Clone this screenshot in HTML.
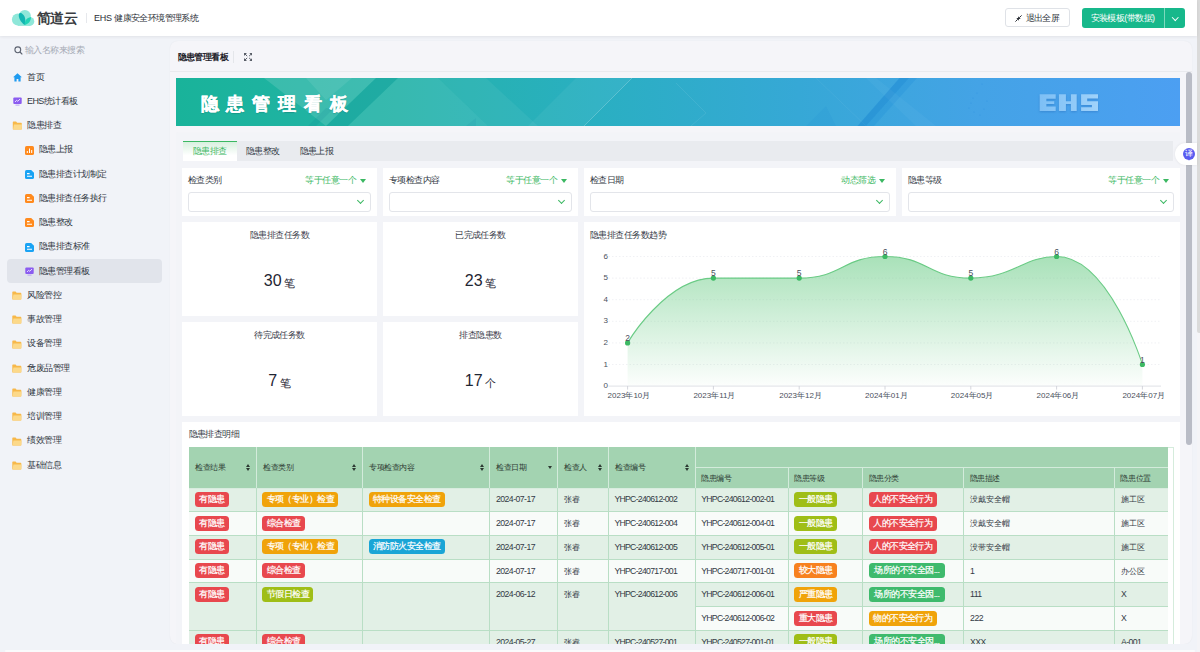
<!DOCTYPE html>
<html><head><meta charset="utf-8">
<style>
*{box-sizing:border-box}
html,body{margin:0;padding:0}
body{width:1200px;height:652px;overflow:hidden;position:relative;background:#f1f3f8;font-family:"Liberation Sans",sans-serif;color:#333a45;letter-spacing:-0.55px}
.a{position:absolute}
.t{position:absolute;white-space:nowrap;line-height:1}
/* sidebar */
.si{position:absolute;left:0;width:165px;height:24px;font-size:9px;letter-spacing:-0.5px;color:#2f3540;line-height:24px;white-space:nowrap}
.si .ic{position:absolute;top:8.2px;left:12.5px;width:9px;height:9px}
.si .tx{position:absolute;left:27px;top:0}
.si.sub .ic{left:24.8px}
.si.sub .tx{left:38.6px}
.card{position:absolute;background:#fff}
.flabel{position:absolute;top:8px;left:6px;font-size:9px;line-height:9px;color:#333a45;white-space:nowrap}
.fop{position:absolute;top:8px;right:21px;font-size:9px;line-height:9px;color:#3bb862;white-space:nowrap}
.fop:after{content:"";position:absolute;right:-10.4px;top:2.5px;border-left:3.5px solid transparent;border-right:3.5px solid transparent;border-top:4.5px solid #3bb862}
.finput{position:absolute;left:6px;right:6px;top:24px;height:19.5px;border:1px solid #e3e5ea;border-radius:3px}
.finput:after{content:"";position:absolute;right:7px;top:5px;width:4px;height:4px;border-right:1px solid #3bb862;border-bottom:1px solid #3bb862;transform:rotate(45deg)}
.stt{position:absolute;left:0;right:0;top:9px;text-align:center;font-size:9px;line-height:9px;color:#3b404b}
.stv{position:absolute;left:0;right:0;top:49px;text-align:center;font-size:16px;line-height:20px;color:#1f2633;letter-spacing:0}
.stv span{font-size:11px;margin-left:2.5px;position:relative;top:1px}
</style></head>
<body>
<!-- right strip -->
<div class="a" style="left:1196.5px;top:0;width:3.5px;height:652px;background:#f4f4f7"></div><div class="a" style="left:1197px;top:-4px;width:4px;height:337.4px;border-radius:2px;background:#dadada"></div>
<!-- header -->
<div class="a" style="left:0;top:0;width:1197px;height:36px;background:#fff;box-shadow:0 1px 3px rgba(0,0,0,.07)">
  <svg class="a" style="left:8px;top:6px" width="32" height="24" viewBox="0 0 32 24">
    <g fill="#8fe7d9"><circle cx="9.8" cy="13.5" r="5.9"/><circle cx="16.8" cy="10" r="6.1"/><circle cx="21.8" cy="15.4" r="4.5"/><rect x="9.8" y="12" width="12" height="7.9"/></g>
    <path d="M16.75,19.1 C12.5,16 10.2,11.5 10.9,8.2 C11.2,6.9 12.5,6.6 13.6,7.2 C17,9.2 18.3,14 16.75,19.1 Z" fill="#12b6b2"/>
    <path d="M16.75,19.1 C16.4,15 18.6,11.8 22.9,11 C23.3,14.6 20.6,17.8 16.75,19.1 Z" fill="#1fd4b6"/>
  </svg>
  <div class="t" style="left:37px;top:11px;font-size:14px;line-height:15px;color:#3a3d42;font-weight:bold;letter-spacing:-0.6px">简道云</div>
  <div class="a" style="left:85.5px;top:13px;width:1px;height:10px;background:#e6e8ec"></div>
  <div class="t" style="left:94px;top:14px;font-size:9px;line-height:9px;color:#2b2f36;letter-spacing:-0.6px"><span style="letter-spacing:-0.2px">EHS </span>健康安全环境管理系统</div>
  <!-- buttons -->
  <div class="a" style="left:1004.5px;top:8.3px;width:65px;height:19px;border:1px solid #dfe2e7;border-radius:3px;background:#fff"></div>
  <svg class="a" style="left:1015.2px;top:14.6px" width="7" height="7" viewBox="0 0 7 7"><path d="M6.6,0.4 L4.3,2.7 M0.4,6.6 L2.7,4.3" stroke="#2b2f36" stroke-width="1"/><path d="M3.1,1.3 L3.1,3.9 L5.7,3.9Z M3.9,5.7 L3.9,3.1 L1.3,3.1Z" fill="#2b2f36"/></svg>
  <div class="t" style="left:1025.5px;top:13.5px;font-size:9px;line-height:9px;color:#2b2f36">退出全屏</div>
  <div class="a" style="left:1082px;top:8.3px;width:102.6px;height:19.3px;border-radius:3px;background:#17b88b"></div>
  <div class="a" style="left:1164.3px;top:8.3px;width:1px;height:19.3px;background:#7dd9bd"></div>
  <div class="t" style="left:1090.5px;top:13.7px;font-size:9px;line-height:9px;color:#fff">安装模板(带数据)</div>
  <div class="a" style="left:1172.5px;top:14.5px;width:4.5px;height:4.5px;border-right:1.2px solid #fff;border-bottom:1.2px solid #fff;transform:rotate(45deg)"></div>
</div>

<!-- sidebar -->
<svg class="a" style="left:13.5px;top:46px" width="9" height="9" viewBox="0 0 9 9"><circle cx="3.8" cy="3.8" r="2.9" fill="none" stroke="#5c6270" stroke-width="1.1"/><path d="M6,6 L8.3,8.3" stroke="#5c6270" stroke-width="1.2"/></svg>
<div class="t" style="left:25px;top:45.5px;font-size:9px;line-height:9px;color:#a6abb6">输入名称来搜索</div>

<div class="si" style="top:64.70px"><svg class="ic" viewBox="0 0 9 9"><path d="M4.5,0.3 L8.9,4.3 L7.6,4.3 L7.6,8.6 L5.4,8.6 L5.4,6 L3.6,6 L3.6,8.6 L1.4,8.6 L1.4,4.3 L0.1,4.3Z" fill="#1f9bf0"/></svg><span class="tx">首页</span></div>
<div class="si" style="top:88.95px"><svg class="ic" viewBox="0 0 9 9"><rect x="0.3" y="0.5" width="8.4" height="6.5" rx="1" fill="#8b5cf0"/><rect x="2.5" y="7.6" width="4" height="1" fill="#b9a0f7"/><path d="M2,5 L3.6,3.3 L4.8,4.3 L7,2" stroke="#fff" stroke-width="0.8" fill="none"/></svg><span class="tx"><span style="letter-spacing:-0.6px">EHS</span>统计看板</span></div>
<div class="si" style="top:113.20px"><svg class="ic" viewBox="0 0 9 9" style="left:12px;width:10px"><path d="M0.3,1.3 Q0.3,0.6 1,0.6 L3.6,0.6 L4.6,1.7 L8.6,1.7 Q9.3,1.7 9.3,2.4 L9.3,7.9 Q9.3,8.6 8.6,8.6 L1,8.6 Q0.3,8.6 0.3,7.9Z" fill="#f7b84a"/><path d="M1.4,3.4 L9.6,3.4 L9.2,8.1 Q9.1,8.6 8.6,8.6 L1,8.6 Q0.5,8.6 0.6,8.1Z" fill="#fcd98a"/></svg><span class="tx">隐患排查</span></div>
<div class="si sub" style="top:137.45px"><svg class="ic" viewBox="0 0 9 9"><rect x="0" y="0" width="9" height="9" rx="1.6" fill="#ff8a1e"/><path d="M2.3,7 L2.3,5 M4.5,7 L4.5,2.5 M6.7,7 L6.7,4" stroke="#fff" stroke-width="1"/></svg><span class="tx">隐患上报</span></div>
<div class="si sub" style="top:161.70px"><svg class="ic" viewBox="0 0 9 9"><path d="M1.6,0 H6.2 L9,2.8 V7.4 Q9,9 7.4,9 H1.6 Q0,9 0,7.4 V1.6 Q0,0 1.6,0Z" fill="#1aa3f4"/><path d="M2,3.6 L4.6,3.6 M2,6.2 L7,6.2" stroke="#fff" stroke-width="1.1"/></svg><span class="tx">隐患排查计划制定</span></div>
<div class="si sub" style="top:185.95px"><svg class="ic" viewBox="0 0 9 9"><path d="M1.6,0 H6.2 L9,2.8 V7.4 Q9,9 7.4,9 H1.6 Q0,9 0,7.4 V1.6 Q0,0 1.6,0Z" fill="#ff8a1e"/><path d="M2,3.6 L4.6,3.6 M2,6.2 L7,6.2" stroke="#fff" stroke-width="1.1"/></svg><span class="tx">隐患排查任务执行</span></div>
<div class="si sub" style="top:210.20px"><svg class="ic" viewBox="0 0 9 9"><path d="M1.6,0 H6.2 L9,2.8 V7.4 Q9,9 7.4,9 H1.6 Q0,9 0,7.4 V1.6 Q0,0 1.6,0Z" fill="#ff8a1e"/><path d="M2,3.6 L4.6,3.6 M2,6.2 L7,6.2" stroke="#fff" stroke-width="1.1"/></svg><span class="tx">隐患整改</span></div>
<div class="si sub" style="top:234.45px"><svg class="ic" viewBox="0 0 9 9"><path d="M1.6,0 H6.2 L9,2.8 V7.4 Q9,9 7.4,9 H1.6 Q0,9 0,7.4 V1.6 Q0,0 1.6,0Z" fill="#1aa3f4"/><path d="M2,3.6 L4.6,3.6 M2,6.2 L7,6.2" stroke="#fff" stroke-width="1.1"/></svg><span class="tx">隐患排查标准</span></div>
<div class="a" style="left:7px;top:258.8px;width:155px;height:24.6px;border-radius:4px;background:#e1e4eb"></div>
<div class="si sub" style="top:258.70px"><svg class="ic" viewBox="0 0 9 9"><rect x="0.3" y="0.5" width="8.4" height="6.5" rx="1" fill="#8b5cf0"/><rect x="2.5" y="7.6" width="4" height="1" fill="#b9a0f7"/><path d="M2,5 L3.6,3.3 L4.8,4.3 L7,2" stroke="#fff" stroke-width="0.8" fill="none"/></svg><span class="tx">隐患管理看板</span></div>
<svg width="0" height="0" style="position:absolute"><defs><g id="fold"><path d="M0.3,1.3 Q0.3,0.6 1,0.6 L3.6,0.6 L4.6,1.7 L8.6,1.7 Q9.3,1.7 9.3,2.4 L9.3,7.9 Q9.3,8.6 8.6,8.6 L1,8.6 Q0.3,8.6 0.3,7.9Z" fill="#f7b84a"/><path d="M1.4,3.4 L9.6,3.4 L9.2,8.1 Q9.1,8.6 8.6,8.6 L1,8.6 Q0.5,8.6 0.6,8.1Z" fill="#fcd98a"/></g></defs></svg>
<div class="si" style="top:282.95px"><svg class="ic" viewBox="0 0 10 9" style="left:12px;width:10px"><use href="#fold"/></svg><span class="tx">风险管控</span></div>
<div class="si" style="top:307.20px"><svg class="ic" viewBox="0 0 10 9" style="left:12px;width:10px"><use href="#fold"/></svg><span class="tx">事故管理</span></div>
<div class="si" style="top:331.45px"><svg class="ic" viewBox="0 0 10 9" style="left:12px;width:10px"><use href="#fold"/></svg><span class="tx">设备管理</span></div>
<div class="si" style="top:355.70px"><svg class="ic" viewBox="0 0 10 9" style="left:12px;width:10px"><use href="#fold"/></svg><span class="tx">危废品管理</span></div>
<div class="si" style="top:379.95px"><svg class="ic" viewBox="0 0 10 9" style="left:12px;width:10px"><use href="#fold"/></svg><span class="tx">健康管理</span></div>
<div class="si" style="top:404.20px"><svg class="ic" viewBox="0 0 10 9" style="left:12px;width:10px"><use href="#fold"/></svg><span class="tx">培训管理</span></div>
<div class="si" style="top:428.45px"><svg class="ic" viewBox="0 0 10 9" style="left:12px;width:10px"><use href="#fold"/></svg><span class="tx">绩效管理</span></div>
<div class="si" style="top:452.70px"><svg class="ic" viewBox="0 0 10 9" style="left:12px;width:10px"><use href="#fold"/></svg><span class="tx">基础信息</span></div>

<!-- outer card -->
<div class="a" style="left:170px;top:41px;width:1022px;height:603px;border-radius:8px;background:#f5f5f9;box-shadow:0 0 1.5px rgba(0,0,0,.06)"></div>
<div class="t" style="left:177.5px;top:53px;font-size:9px;line-height:9px;font-weight:bold;color:#1f232b">隐患管理看板</div>
<div class="a" style="left:233px;top:51px;width:1px;height:12px;background:#e4e6ea"></div>
<svg class="a" style="left:244px;top:53px" width="8.3" height="8" viewBox="0 0 8.3 8"><g fill="#585d67"><path d="M0,0 L3,0 L0,3Z M8.3,0 L5.3,0 L8.3,3Z M0,8 L3,8 L0,5Z M8.3,8 L5.3,8 L8.3,5Z"/></g><g stroke="#585d67" stroke-width="1"><path d="M1,1 L3.2,3.1 M7.3,1 L5.1,3.1 M1,7 L3.2,4.9 M7.3,7 L5.1,4.9"/></g></svg>
<div class="a" style="left:170px;top:71px;width:1022px;height:1.2px;background:#e9eaee"></div>
<!-- scrollbar -->
<div class="a" style="left:1186.3px;top:72.3px;width:5.4px;height:372.7px;border-radius:3px;background:#b9bcc6"></div>
<!-- banner -->
<div class="a" style="left:176px;top:78.3px;width:1004px;height:47.9px;overflow:hidden;background:linear-gradient(90deg,#19b39a 0%,#24b3a8 22%,#2aafc2 42%,#36a8d6 62%,#44a3e6 80%,#4c9ff2 100%)">
  <svg class="a" style="left:0;top:0" width="1004" height="48" viewBox="0 0 1004 48">
    <path d="M88,0 L150,48 L200,0Z" fill="rgba(255,255,255,0.13)"/>
    <path d="M200,0 L222,0 L172,48 L150,48Z" fill="rgba(0,110,130,0.10)"/>
    <path d="M130,0 L176,0 L150,22Z" fill="rgba(255,255,255,0.08)"/>
    <path d="M222,0 L262,0 L312,48 L172,48Z" fill="rgba(255,255,255,0.09)"/>
    <path d="M150,30 L132,48 L140,48 L158,30Z" fill="rgba(0,110,140,0.10)"/>
    <path d="M262,0 L310,0 L362,48 L312,48Z" fill="rgba(255,255,255,0.05)"/>
    <path d="M300,40 L290,48 L300,48Z" fill="rgba(0,100,150,0.08)"/>
    <path d="M400,0 L456,0 L408,48 L352,48Z" fill="rgba(255,255,255,0.05)"/>
    <path d="M456,0 L408,48" stroke="rgba(255,255,255,0.22)" stroke-width="1"/>
    <path d="M500,5 L530,35 L515,48" stroke="rgba(255,255,255,0.08)" stroke-width="1" fill="none"/>
    <path d="M640,0 L690,48" stroke="rgba(255,255,255,0.05)" stroke-width="1" fill="none"/>
    <path d="M723.5,0 L733,0 L690,48 L681.5,48Z" fill="rgba(0,110,200,0.28)"/>
    <path d="M733,0 L741,0 L698,48 L690,48Z" fill="rgba(0,120,210,0.14)"/>
    <path d="M690,0 L740,48 L760,48 L700,0Z" fill="rgba(255,255,255,0.035)"/>
    <path d="M650,28 L630,48 L660,48Z" fill="rgba(0,110,200,0.06)"/>
    <g fill="rgba(40,140,225,0.55)"><circle cx="801" cy="15" r="0.6"/><circle cx="797" cy="20" r="0.6"/><circle cx="795" cy="25" r="0.6"/><circle cx="793" cy="30" r="0.6"/><circle cx="806" cy="6" r="0.6"/><circle cx="811" cy="23" r="0.6"/><circle cx="808" cy="31" r="0.6"/><circle cx="804" cy="37" r="0.6"/><circle cx="798" cy="34" r="0.6"/></g>
  </svg>
  <div class="t" style="left:24.6px;top:17px;font-size:18px;line-height:18px;font-weight:bold;color:#fff;letter-spacing:7.9px;-webkit-text-stroke:0.35px #fff;text-shadow:0 1px 1px rgba(0,60,60,.25)">隐患管理看板</div>
  <svg class="a" style="left:859px;top:9.7px;filter:drop-shadow(0.5px 1.5px 1px rgba(30,90,170,.35))" width="70" height="28" viewBox="0 0 1200 480"><defs><linearGradient id="eg" x1="0" y1="0" x2="1" y2="0"><stop offset="0" stop-color="#7dbff5"/><stop offset="1" stop-color="#a0d2fa"/></linearGradient></defs><path fill="url(#eg)" d="M80,105 H355 V185 H195 V225 H330 V275 H195 V315 H355 V395 H80 Z M410,105 H530 V225 H615 V105 H715 V395 H615 V275 H530 V395 H410 Z M790,105 H1080 V180 H895 V225 H1080 V395 H790 V330 H975 V290 H790 Z"/></svg>
</div>
<!-- dashboard bg -->
<div class="a" style="left:176px;top:132.5px;width:1004px;height:520px;background:#f3f4f8;box-shadow:-0.5px 0 1px rgba(0,0,0,.05)"></div>
<!-- tabs -->
<div class="a" style="left:183px;top:140.6px;width:990px;height:20.7px;background:#e9ebef"></div>
<div class="a" style="left:183.2px;top:140.6px;width:53.4px;height:20.7px;background:linear-gradient(180deg,#d8f0df 0%,#fff 70%);border-top:1.5px solid #3bb862"></div>
<div class="t" style="left:193px;top:147px;font-size:9px;line-height:9px;color:#3bb862">隐患排查</div>
<div class="t" style="left:246px;top:147px;font-size:9px;line-height:9px;color:#333a45">隐患整改</div>
<div class="t" style="left:299.5px;top:147px;font-size:9px;line-height:9px;color:#333a45">隐患上报</div>
<!-- filters -->
<div class="card" style="left:182px;top:168px;width:195px;height:48px"><div class="flabel">检查类别</div><div class="fop">等于任意一个</div><div class="finput"></div></div>
<div class="card" style="left:383px;top:168px;width:195px;height:48px"><div class="flabel">专项检查内容</div><div class="fop">等于任意一个</div><div class="finput"></div></div>
<div class="card" style="left:584px;top:168px;width:312px;height:48px"><div class="flabel">检查日期</div><div class="fop">动态筛选</div><div class="finput"></div></div>
<div class="card" style="left:902px;top:168px;width:278px;height:48px"><div class="flabel">隐患等级</div><div class="fop">等于任意一个</div><div class="finput"></div></div>
<!-- stats -->
<div class="card" style="left:182px;top:222px;width:195px;height:94px"><div class="stt">隐患排查任务数</div><div class="stv">30<span>笔</span></div></div>
<div class="card" style="left:383px;top:222px;width:195px;height:94px"><div class="stt">已完成任务数</div><div class="stv">23<span>笔</span></div></div>
<div class="card" style="left:182px;top:322px;width:195px;height:94px"><div class="stt">待完成任务数</div><div class="stv">7<span>笔</span></div></div>
<div class="card" style="left:383px;top:322px;width:195px;height:94px"><div class="stt">排查隐患数</div><div class="stv">17<span>个</span></div></div>
<!-- chart -->
<div class="card" style="left:584px;top:222px;width:596px;height:194px"></div>
<svg class="a" style="left:0;top:0" width="1200" height="652" viewBox="0 0 1200 652">
<defs><linearGradient id="ag" x1="0" y1="0" x2="0" y2="1"><stop offset="0" stop-color="#74cf8e" stop-opacity="0.62"/><stop offset="1" stop-color="#74cf8e" stop-opacity="0.02"/></linearGradient></defs>
<line x1="608.5" y1="364.5" x2="1161" y2="364.5" stroke="#eceef1" stroke-width="0.8" stroke-dasharray="1.5,2"/>
<line x1="608.5" y1="342.9" x2="1161" y2="342.9" stroke="#eceef1" stroke-width="0.8" stroke-dasharray="1.5,2"/>
<line x1="608.5" y1="321.3" x2="1161" y2="321.3" stroke="#eceef1" stroke-width="0.8" stroke-dasharray="1.5,2"/>
<line x1="608.5" y1="299.7" x2="1161" y2="299.7" stroke="#eceef1" stroke-width="0.8" stroke-dasharray="1.5,2"/>
<line x1="608.5" y1="278.1" x2="1161" y2="278.1" stroke="#eceef1" stroke-width="0.8" stroke-dasharray="1.5,2"/>
<line x1="608.5" y1="256.5" x2="1161" y2="256.5" stroke="#eceef1" stroke-width="0.8" stroke-dasharray="1.5,2"/>
<path d="M627.60,386.10 L627.60,342.90 C627.60,342.90 665.68,278.10 713.40,278.10 C751.48,278.10 756.96,278.10 799.20,278.10 C842.76,278.10 842.10,256.50 885.00,256.50 C927.90,256.50 927.90,278.10 970.80,278.10 C1013.70,278.10 1023.07,256.50 1056.60,256.50 C1108.87,256.50 1142.40,364.50 1142.40,364.50 L1142.40,386.10 Z" fill="url(#ag)"/>
<line x1="608.5" y1="386.1" x2="1161" y2="386.1" stroke="#dfe1e6" stroke-width="1"/>
<line x1="627.6" y1="386.1" x2="627.6" y2="389.6" stroke="#c9ccd3" stroke-width="0.8"/>
<line x1="713.4" y1="386.1" x2="713.4" y2="389.6" stroke="#c9ccd3" stroke-width="0.8"/>
<line x1="799.2" y1="386.1" x2="799.2" y2="389.6" stroke="#c9ccd3" stroke-width="0.8"/>
<line x1="885.0" y1="386.1" x2="885.0" y2="389.6" stroke="#c9ccd3" stroke-width="0.8"/>
<line x1="970.8" y1="386.1" x2="970.8" y2="389.6" stroke="#c9ccd3" stroke-width="0.8"/>
<line x1="1056.6" y1="386.1" x2="1056.6" y2="389.6" stroke="#c9ccd3" stroke-width="0.8"/>
<line x1="1142.4" y1="386.1" x2="1142.4" y2="389.6" stroke="#c9ccd3" stroke-width="0.8"/>
<path d="M627.60,342.90 C627.60,342.90 665.68,278.10 713.40,278.10 C751.48,278.10 756.96,278.10 799.20,278.10 C842.76,278.10 842.10,256.50 885.00,256.50 C927.90,256.50 927.90,278.10 970.80,278.10 C1013.70,278.10 1023.07,256.50 1056.60,256.50 C1108.87,256.50 1142.40,364.50 1142.40,364.50" fill="none" stroke="#6acb85" stroke-width="1.1"/>
<circle cx="627.60" cy="342.90" r="2.6" fill="#3cb963"/>
<circle cx="713.40" cy="278.10" r="2.6" fill="#3cb963"/>
<circle cx="799.20" cy="278.10" r="2.6" fill="#3cb963"/>
<circle cx="885.00" cy="256.50" r="2.6" fill="#3cb963"/>
<circle cx="970.80" cy="278.10" r="2.6" fill="#3cb963"/>
<circle cx="1056.60" cy="256.50" r="2.6" fill="#3cb963"/>
<circle cx="1142.40" cy="364.50" r="2.6" fill="#3cb963"/>
</svg>
<div class="t" style="left:600px;width:8px;text-align:right;top:382.1px;font-size:8px;line-height:8px;letter-spacing:0;color:#4a505c">0</div>
<div class="t" style="left:600px;width:8px;text-align:right;top:360.5px;font-size:8px;line-height:8px;letter-spacing:0;color:#4a505c">1</div>
<div class="t" style="left:600px;width:8px;text-align:right;top:338.9px;font-size:8px;line-height:8px;letter-spacing:0;color:#4a505c">2</div>
<div class="t" style="left:600px;width:8px;text-align:right;top:317.3px;font-size:8px;line-height:8px;letter-spacing:0;color:#4a505c">3</div>
<div class="t" style="left:600px;width:8px;text-align:right;top:295.7px;font-size:8px;line-height:8px;letter-spacing:0;color:#4a505c">4</div>
<div class="t" style="left:600px;width:8px;text-align:right;top:274.1px;font-size:8px;line-height:8px;letter-spacing:0;color:#4a505c">5</div>
<div class="t" style="left:600px;width:8px;text-align:right;top:252.5px;font-size:8px;line-height:8px;letter-spacing:0;color:#4a505c">6</div>
<div class="t" style="left:607.6px;width:40px;text-align:center;top:391.6px;font-size:8px;line-height:8px;letter-spacing:0;color:#4a505c">2023年10月</div>
<div class="t" style="left:617.6px;width:20px;text-align:center;top:334.1px;font-size:8.5px;line-height:8px;letter-spacing:0;color:#4a505c">2</div>
<div class="t" style="left:693.4px;width:40px;text-align:center;top:391.6px;font-size:8px;line-height:8px;letter-spacing:0;color:#4a505c">2023年11月</div>
<div class="t" style="left:703.4px;width:20px;text-align:center;top:269.3px;font-size:8.5px;line-height:8px;letter-spacing:0;color:#4a505c">5</div>
<div class="t" style="left:779.2px;width:40px;text-align:center;top:391.6px;font-size:8px;line-height:8px;letter-spacing:0;color:#4a505c">2023年12月</div>
<div class="t" style="left:789.2px;width:20px;text-align:center;top:269.3px;font-size:8.5px;line-height:8px;letter-spacing:0;color:#4a505c">5</div>
<div class="t" style="left:865.0px;width:40px;text-align:center;top:391.6px;font-size:8px;line-height:8px;letter-spacing:0;color:#4a505c">2024年01月</div>
<div class="t" style="left:875.0px;width:20px;text-align:center;top:247.7px;font-size:8.5px;line-height:8px;letter-spacing:0;color:#4a505c">6</div>
<div class="t" style="left:950.8px;width:40px;text-align:center;top:391.6px;font-size:8px;line-height:8px;letter-spacing:0;color:#4a505c">2024年05月</div>
<div class="t" style="left:960.8px;width:20px;text-align:center;top:269.3px;font-size:8.5px;line-height:8px;letter-spacing:0;color:#4a505c">5</div>
<div class="t" style="left:1036.6px;width:40px;text-align:center;top:391.6px;font-size:8px;line-height:8px;letter-spacing:0;color:#4a505c">2024年06月</div>
<div class="t" style="left:1046.6px;width:20px;text-align:center;top:247.7px;font-size:8.5px;line-height:8px;letter-spacing:0;color:#4a505c">6</div>
<div class="t" style="left:1122.4px;width:40px;text-align:center;top:391.6px;font-size:8px;line-height:8px;letter-spacing:0;color:#4a505c">2024年07月</div>
<div class="t" style="left:1132.4px;width:20px;text-align:center;top:355.7px;font-size:8.5px;line-height:8px;letter-spacing:0;color:#4a505c">1</div>
<div class="t" style="left:590px;top:231px;font-size:9px;line-height:9px;color:#333a45">隐患排查任务数趋势</div>
<!-- detail -->
<div class="card" style="left:182px;top:421.5px;width:998px;height:240px"></div>
<div class="t" style="left:188.5px;top:430px;font-size:9px;line-height:9px;color:#333a45">隐患排查明细</div>
<div class="a" style="left:0;top:0;width:1200px;height:643.8px;overflow:hidden">
<div class="a" style="left:188.5px;top:447px;width:979.5px;height:41px;background:#a3d3b1"></div>
<div class="a" style="left:1168px;top:447px;width:5.5px;height:210px;border-right:1px solid #d5ecdc;border-top:1px solid #d5ecdc;background:#fff"></div>
<div class="a" style="left:188.5px;top:488px;width:979.5px;height:23.7px;background:#e2f0e6"></div>
<div class="a" style="left:188.5px;top:511.7px;width:979.5px;height:23.7px;background:#f8fbf9"></div>
<div class="a" style="left:188.5px;top:535.4px;width:979.5px;height:23.8px;background:#e2f0e6"></div>
<div class="a" style="left:188.5px;top:559.2px;width:979.5px;height:23.7px;background:#f8fbf9"></div>
<div class="a" style="left:188.5px;top:582.9px;width:979.5px;height:23.7px;background:#e2f0e6"></div>
<div class="a" style="left:188.5px;top:606.6px;width:979.5px;height:23.8px;background:#f8fbf9"></div>
<div class="a" style="left:188.5px;top:630.4px;width:979.5px;height:23.7px;background:#e2f0e6"></div>
<div class="a" style="left:188.5px;top:606.6px;width:506.7px;height:23.8px;background:#e2f0e6"></div>
<div class="a" style="left:255.8px;top:447px;width:1px;height:41px;background:#d3ebdb"></div>
<div class="a" style="left:361.8px;top:447px;width:1px;height:41px;background:#d3ebdb"></div>
<div class="a" style="left:489.0px;top:447px;width:1px;height:41px;background:#d3ebdb"></div>
<div class="a" style="left:557.0px;top:447px;width:1px;height:41px;background:#d3ebdb"></div>
<div class="a" style="left:607.9px;top:447px;width:1px;height:41px;background:#d3ebdb"></div>
<div class="a" style="left:694.7px;top:447px;width:1px;height:41px;background:#d3ebdb"></div>
<div class="a" style="left:695.2px;top:467.0px;width:472.8px;height:1px;background:#d3ebdb"></div>
<div class="a" style="left:787.5px;top:467.5px;width:1px;height:20.5px;background:#d3ebdb"></div>
<div class="a" style="left:862.0px;top:467.5px;width:1px;height:20.5px;background:#d3ebdb"></div>
<div class="a" style="left:963.1px;top:467.5px;width:1px;height:20.5px;background:#d3ebdb"></div>
<div class="a" style="left:1113.9px;top:467.5px;width:1px;height:20.5px;background:#d3ebdb"></div>
<div class="a" style="left:188.5px;top:487.5px;width:979.5px;height:1px;background:#d8ecdf"></div>
<div class="a" style="left:188.5px;top:511.2px;width:979.5px;height:1px;background:#b9dec5"></div>
<div class="a" style="left:188.5px;top:534.9px;width:979.5px;height:1px;background:#b9dec5"></div>
<div class="a" style="left:188.5px;top:558.7px;width:979.5px;height:1px;background:#b9dec5"></div>
<div class="a" style="left:188.5px;top:582.4px;width:979.5px;height:1px;background:#b9dec5"></div>
<div class="a" style="left:695.2px;top:606.1px;width:472.8px;height:1px;background:#b9dec5"></div>
<div class="a" style="left:188.5px;top:629.9px;width:979.5px;height:1px;background:#b9dec5"></div>
<div class="a" style="left:255.8px;top:488px;width:1px;height:170px;background:#b9dec5"></div>
<div class="a" style="left:361.8px;top:488px;width:1px;height:170px;background:#b9dec5"></div>
<div class="a" style="left:489.0px;top:488px;width:1px;height:170px;background:#b9dec5"></div>
<div class="a" style="left:557.0px;top:488px;width:1px;height:170px;background:#b9dec5"></div>
<div class="a" style="left:607.9px;top:488px;width:1px;height:170px;background:#b9dec5"></div>
<div class="a" style="left:694.7px;top:488px;width:1px;height:170px;background:#b9dec5"></div>
<div class="a" style="left:787.5px;top:488px;width:1px;height:170px;background:#b9dec5"></div>
<div class="a" style="left:862.0px;top:488px;width:1px;height:170px;background:#b9dec5"></div>
<div class="a" style="left:963.1px;top:488px;width:1px;height:170px;background:#b9dec5"></div>
<div class="a" style="left:1113.9px;top:488px;width:1px;height:170px;background:#b9dec5"></div>
<div class="t" style="left:195.2px;top:463.0px;font-size:8px;line-height:9px;letter-spacing:-0.4px;color:#2d3a33">检查结果</div>
<div class="a" style="left:246.3px;top:463.5px;width:0;height:0;border-left:2.3px solid transparent;border-right:2.3px solid transparent;border-bottom:3px solid #2d3a33"></div>
<div class="a" style="left:246.3px;top:467.8px;width:0;height:0;border-left:2.3px solid transparent;border-right:2.3px solid transparent;border-top:3px solid #2d3a33"></div>
<div class="t" style="left:263.0px;top:463.0px;font-size:8px;line-height:9px;letter-spacing:-0.4px;color:#2d3a33">检查类别</div>
<div class="a" style="left:352.3px;top:463.5px;width:0;height:0;border-left:2.3px solid transparent;border-right:2.3px solid transparent;border-bottom:3px solid #2d3a33"></div>
<div class="a" style="left:352.3px;top:467.8px;width:0;height:0;border-left:2.3px solid transparent;border-right:2.3px solid transparent;border-top:3px solid #2d3a33"></div>
<div class="t" style="left:369.0px;top:463.0px;font-size:8px;line-height:9px;letter-spacing:-0.4px;color:#2d3a33">专项检查内容</div>
<div class="a" style="left:479.5px;top:463.5px;width:0;height:0;border-left:2.3px solid transparent;border-right:2.3px solid transparent;border-bottom:3px solid #2d3a33"></div>
<div class="a" style="left:479.5px;top:467.8px;width:0;height:0;border-left:2.3px solid transparent;border-right:2.3px solid transparent;border-top:3px solid #2d3a33"></div>
<div class="t" style="left:496.2px;top:463.0px;font-size:8px;line-height:9px;letter-spacing:-0.4px;color:#2d3a33">检查日期</div>
<div class="a" style="left:547.5px;top:466px;width:0;height:0;border-left:2.5px solid transparent;border-right:2.5px solid transparent;border-top:3px solid #2d3a33"></div>
<div class="t" style="left:564.2px;top:463.0px;font-size:8px;line-height:9px;letter-spacing:-0.4px;color:#2d3a33">检查人</div>
<div class="a" style="left:598.4px;top:463.5px;width:0;height:0;border-left:2.3px solid transparent;border-right:2.3px solid transparent;border-bottom:3px solid #2d3a33"></div>
<div class="a" style="left:598.4px;top:467.8px;width:0;height:0;border-left:2.3px solid transparent;border-right:2.3px solid transparent;border-top:3px solid #2d3a33"></div>
<div class="t" style="left:615.1px;top:463.0px;font-size:8px;line-height:9px;letter-spacing:-0.4px;color:#2d3a33">检查编号</div>
<div class="a" style="left:685.2px;top:463.5px;width:0;height:0;border-left:2.3px solid transparent;border-right:2.3px solid transparent;border-bottom:3px solid #2d3a33"></div>
<div class="a" style="left:685.2px;top:467.8px;width:0;height:0;border-left:2.3px solid transparent;border-right:2.3px solid transparent;border-top:3px solid #2d3a33"></div>
<div class="t" style="left:701.2px;top:473.5px;font-size:8px;line-height:9px;letter-spacing:-0.4px;color:#2d3a33">隐患编号</div>
<div class="t" style="left:794.0px;top:473.5px;font-size:8px;line-height:9px;letter-spacing:-0.4px;color:#2d3a33">隐患等级</div>
<div class="t" style="left:868.5px;top:473.5px;font-size:8px;line-height:9px;letter-spacing:-0.4px;color:#2d3a33">隐患分类</div>
<div class="t" style="left:969.6px;top:473.5px;font-size:8px;line-height:9px;letter-spacing:-0.4px;color:#2d3a33">隐患描述</div>
<div class="t" style="left:1120.4px;top:473.5px;font-size:8px;line-height:9px;letter-spacing:-0.4px;color:#2d3a33">隐患位置</div>
<div class="t" style="left:194.7px;top:491.9px;width:34.3px;height:15px;border-radius:3.5px;background:#e8484e;color:#fff;font-size:9px;line-height:15px;text-align:center;-webkit-text-stroke:0.2px #fff">有隐患</div>
<div class="t" style="left:262.4px;top:491.9px;width:76px;height:15px;border-radius:3.5px;background:#f0a30a;color:#fff;font-size:9px;line-height:15px;text-align:center;-webkit-text-stroke:0.2px #fff">专项（专业）检查</div>
<div class="t" style="left:368.5px;top:491.9px;width:76.5px;height:15px;border-radius:3.5px;background:#f0a30a;color:#fff;font-size:9px;line-height:15px;text-align:center;-webkit-text-stroke:0.2px #fff">特种设备安全检查</div>
<div class="t" style="left:496.0px;top:495.3px;font-size:8.7px;line-height:9px;letter-spacing:-0.55px;color:#333a45">2024-07-17</div>
<div class="t" style="left:564.0px;top:495.3px;font-size:8px;line-height:9px;letter-spacing:0px;color:#333a45">张睿</div>
<div class="t" style="left:614.4px;top:495.3px;font-size:8.7px;line-height:9px;letter-spacing:-0.72px;color:#333a45">YHPC-240612-002</div>
<div class="t" style="left:701.2px;top:495.3px;font-size:8.7px;line-height:9px;letter-spacing:-0.72px;color:#333a45">YHPC-240612-002-01</div>
<div class="t" style="left:794.3px;top:491.9px;width:42.5px;height:15px;border-radius:3.5px;background:#9fbe17;color:#fff;font-size:9px;line-height:15px;text-align:center;-webkit-text-stroke:0.2px #fff">一般隐患</div>
<div class="t" style="left:869.0px;top:491.9px;width:67.6px;height:15px;border-radius:3.5px;background:#e8484e;color:#fff;font-size:9px;line-height:15px;text-align:center;-webkit-text-stroke:0.2px #fff">人的不安全行为</div>
<div class="t" style="left:970.1px;top:495.3px;font-size:8px;line-height:9px;letter-spacing:0px;color:#333a45">没戴安全帽</div>
<div class="t" style="left:1120.9px;top:495.3px;font-size:8px;line-height:9px;letter-spacing:0px;color:#333a45">施工区</div>
<div class="t" style="left:194.7px;top:515.6px;width:34.3px;height:15px;border-radius:3.5px;background:#e8484e;color:#fff;font-size:9px;line-height:15px;text-align:center;-webkit-text-stroke:0.2px #fff">有隐患</div>
<div class="t" style="left:262.4px;top:515.6px;width:42.5px;height:15px;border-radius:3.5px;background:#e8484e;color:#fff;font-size:9px;line-height:15px;text-align:center;-webkit-text-stroke:0.2px #fff">综合检查</div>
<div class="t" style="left:496.0px;top:519.0px;font-size:8.7px;line-height:9px;letter-spacing:-0.55px;color:#333a45">2024-07-17</div>
<div class="t" style="left:564.0px;top:519.0px;font-size:8px;line-height:9px;letter-spacing:0px;color:#333a45">张睿</div>
<div class="t" style="left:614.4px;top:519.0px;font-size:8.7px;line-height:9px;letter-spacing:-0.72px;color:#333a45">YHPC-240612-004</div>
<div class="t" style="left:701.2px;top:519.0px;font-size:8.7px;line-height:9px;letter-spacing:-0.72px;color:#333a45">YHPC-240612-004-01</div>
<div class="t" style="left:794.3px;top:515.6px;width:42.5px;height:15px;border-radius:3.5px;background:#9fbe17;color:#fff;font-size:9px;line-height:15px;text-align:center;-webkit-text-stroke:0.2px #fff">一般隐患</div>
<div class="t" style="left:869.0px;top:515.6px;width:67.6px;height:15px;border-radius:3.5px;background:#e8484e;color:#fff;font-size:9px;line-height:15px;text-align:center;-webkit-text-stroke:0.2px #fff">人的不安全行为</div>
<div class="t" style="left:970.1px;top:519.0px;font-size:8px;line-height:9px;letter-spacing:0px;color:#333a45">没戴安全帽</div>
<div class="t" style="left:1120.9px;top:519.0px;font-size:8px;line-height:9px;letter-spacing:0px;color:#333a45">施工区</div>
<div class="t" style="left:194.7px;top:539.3px;width:34.3px;height:15px;border-radius:3.5px;background:#e8484e;color:#fff;font-size:9px;line-height:15px;text-align:center;-webkit-text-stroke:0.2px #fff">有隐患</div>
<div class="t" style="left:262.4px;top:539.3px;width:76px;height:15px;border-radius:3.5px;background:#f0a30a;color:#fff;font-size:9px;line-height:15px;text-align:center;-webkit-text-stroke:0.2px #fff">专项（专业）检查</div>
<div class="t" style="left:368.5px;top:539.3px;width:76.5px;height:15px;border-radius:3.5px;background:#1aa5d6;color:#fff;font-size:9px;line-height:15px;text-align:center;-webkit-text-stroke:0.2px #fff">消防防火安全检查</div>
<div class="t" style="left:496.0px;top:542.7px;font-size:8.7px;line-height:9px;letter-spacing:-0.55px;color:#333a45">2024-07-17</div>
<div class="t" style="left:564.0px;top:542.7px;font-size:8px;line-height:9px;letter-spacing:0px;color:#333a45">张睿</div>
<div class="t" style="left:614.4px;top:542.7px;font-size:8.7px;line-height:9px;letter-spacing:-0.72px;color:#333a45">YHPC-240612-005</div>
<div class="t" style="left:701.2px;top:542.7px;font-size:8.7px;line-height:9px;letter-spacing:-0.72px;color:#333a45">YHPC-240612-005-01</div>
<div class="t" style="left:794.3px;top:539.3px;width:42.5px;height:15px;border-radius:3.5px;background:#9fbe17;color:#fff;font-size:9px;line-height:15px;text-align:center;-webkit-text-stroke:0.2px #fff">一般隐患</div>
<div class="t" style="left:869.0px;top:539.3px;width:67.6px;height:15px;border-radius:3.5px;background:#e8484e;color:#fff;font-size:9px;line-height:15px;text-align:center;-webkit-text-stroke:0.2px #fff">人的不安全行为</div>
<div class="t" style="left:970.1px;top:542.7px;font-size:8px;line-height:9px;letter-spacing:0px;color:#333a45">没带安全帽</div>
<div class="t" style="left:1120.9px;top:542.7px;font-size:8px;line-height:9px;letter-spacing:0px;color:#333a45">施工区</div>
<div class="t" style="left:194.7px;top:563.1px;width:34.3px;height:15px;border-radius:3.5px;background:#e8484e;color:#fff;font-size:9px;line-height:15px;text-align:center;-webkit-text-stroke:0.2px #fff">有隐患</div>
<div class="t" style="left:262.4px;top:563.1px;width:42.5px;height:15px;border-radius:3.5px;background:#e8484e;color:#fff;font-size:9px;line-height:15px;text-align:center;-webkit-text-stroke:0.2px #fff">综合检查</div>
<div class="t" style="left:496.0px;top:566.5px;font-size:8.7px;line-height:9px;letter-spacing:-0.55px;color:#333a45">2024-07-17</div>
<div class="t" style="left:564.0px;top:566.5px;font-size:8px;line-height:9px;letter-spacing:0px;color:#333a45">张睿</div>
<div class="t" style="left:614.4px;top:566.5px;font-size:8.7px;line-height:9px;letter-spacing:-0.72px;color:#333a45">YHPC-240717-001</div>
<div class="t" style="left:701.2px;top:566.5px;font-size:8.7px;line-height:9px;letter-spacing:-0.72px;color:#333a45">YHPC-240717-001-01</div>
<div class="t" style="left:794.3px;top:563.1px;width:42.5px;height:15px;border-radius:3.5px;background:#f7811f;color:#fff;font-size:9px;line-height:15px;text-align:center;-webkit-text-stroke:0.2px #fff">较大隐患</div>
<div class="t" style="left:869.0px;top:563.1px;width:76px;height:15px;border-radius:3.5px;background:#3fba6d;color:#fff;font-size:9px;line-height:15px;text-align:center;-webkit-text-stroke:0.2px #fff">场所的不安全因...</div>
<div class="t" style="left:970.1px;top:566.5px;font-size:8.7px;line-height:9px;letter-spacing:-0.55px;color:#333a45">1</div>
<div class="t" style="left:1120.9px;top:566.5px;font-size:8px;line-height:9px;letter-spacing:0px;color:#333a45">办公区</div>
<div class="t" style="left:194.7px;top:586.8px;width:34.3px;height:15px;border-radius:3.5px;background:#e8484e;color:#fff;font-size:9px;line-height:15px;text-align:center;-webkit-text-stroke:0.2px #fff">有隐患</div>
<div class="t" style="left:262.4px;top:586.8px;width:51px;height:15px;border-radius:3.5px;background:#9fbe17;color:#fff;font-size:9px;line-height:15px;text-align:center;-webkit-text-stroke:0.2px #fff">节假日检查</div>
<div class="t" style="left:496.0px;top:590.2px;font-size:8.7px;line-height:9px;letter-spacing:-0.55px;color:#333a45">2024-06-12</div>
<div class="t" style="left:564.0px;top:590.2px;font-size:8px;line-height:9px;letter-spacing:0px;color:#333a45">张睿</div>
<div class="t" style="left:614.4px;top:590.2px;font-size:8.7px;line-height:9px;letter-spacing:-0.72px;color:#333a45">YHPC-240612-006</div>
<div class="t" style="left:701.2px;top:590.2px;font-size:8.7px;line-height:9px;letter-spacing:-0.72px;color:#333a45">YHPC-240612-006-01</div>
<div class="t" style="left:794.3px;top:586.8px;width:42.5px;height:15px;border-radius:3.5px;background:#f0a30a;color:#fff;font-size:9px;line-height:15px;text-align:center;-webkit-text-stroke:0.2px #fff">严重隐患</div>
<div class="t" style="left:869.0px;top:586.8px;width:76px;height:15px;border-radius:3.5px;background:#3fba6d;color:#fff;font-size:9px;line-height:15px;text-align:center;-webkit-text-stroke:0.2px #fff">场所的不安全因...</div>
<div class="t" style="left:970.1px;top:590.2px;font-size:8.7px;line-height:9px;letter-spacing:-0.55px;color:#333a45">111</div>
<div class="t" style="left:1120.9px;top:590.2px;font-size:8.7px;line-height:9px;letter-spacing:-0.55px;color:#333a45">X</div>
<div class="t" style="left:701.2px;top:613.9px;font-size:8.7px;line-height:9px;letter-spacing:-0.72px;color:#333a45">YHPC-240612-006-02</div>
<div class="t" style="left:794.3px;top:610.5px;width:42.5px;height:15px;border-radius:3.5px;background:#e8484e;color:#fff;font-size:9px;line-height:15px;text-align:center;-webkit-text-stroke:0.2px #fff">重大隐患</div>
<div class="t" style="left:869.0px;top:610.5px;width:67.6px;height:15px;border-radius:3.5px;background:#f0a30a;color:#fff;font-size:9px;line-height:15px;text-align:center;-webkit-text-stroke:0.2px #fff">物的不安全行为</div>
<div class="t" style="left:970.1px;top:613.9px;font-size:8.7px;line-height:9px;letter-spacing:-0.55px;color:#333a45">222</div>
<div class="t" style="left:1120.9px;top:613.9px;font-size:8.7px;line-height:9px;letter-spacing:-0.55px;color:#333a45">X</div>
<div class="t" style="left:194.7px;top:634.3px;width:34.3px;height:15px;border-radius:3.5px;background:#e8484e;color:#fff;font-size:9px;line-height:15px;text-align:center;-webkit-text-stroke:0.2px #fff">有隐患</div>
<div class="t" style="left:262.4px;top:634.3px;width:42.5px;height:15px;border-radius:3.5px;background:#e8484e;color:#fff;font-size:9px;line-height:15px;text-align:center;-webkit-text-stroke:0.2px #fff">综合检查</div>
<div class="t" style="left:496.0px;top:637.7px;font-size:8.7px;line-height:9px;letter-spacing:-0.55px;color:#333a45">2024-05-27</div>
<div class="t" style="left:564.0px;top:637.7px;font-size:8px;line-height:9px;letter-spacing:0px;color:#333a45">张睿</div>
<div class="t" style="left:614.4px;top:637.7px;font-size:8.7px;line-height:9px;letter-spacing:-0.72px;color:#333a45">YHPC-240527-001</div>
<div class="t" style="left:701.2px;top:637.7px;font-size:8.7px;line-height:9px;letter-spacing:-0.72px;color:#333a45">YHPC-240527-001-01</div>
<div class="t" style="left:794.3px;top:634.3px;width:42.5px;height:15px;border-radius:3.5px;background:#9fbe17;color:#fff;font-size:9px;line-height:15px;text-align:center;-webkit-text-stroke:0.2px #fff">一般隐患</div>
<div class="t" style="left:869.0px;top:634.3px;width:76px;height:15px;border-radius:3.5px;background:#3fba6d;color:#fff;font-size:9px;line-height:15px;text-align:center;-webkit-text-stroke:0.2px #fff">场所的不安全因...</div>
<div class="t" style="left:970.1px;top:637.7px;font-size:8.7px;line-height:9px;letter-spacing:-0.55px;color:#333a45">XXX</div>
<div class="t" style="left:1120.9px;top:637.7px;font-size:8.7px;line-height:9px;letter-spacing:-0.55px;color:#333a45">A-001</div>
</div>
<!-- bottom strip -->
<div class="a" style="left:0;top:644px;width:1197px;height:8px;background:#f1f3f8"></div>
<div class="a" style="left:5px;top:649.5px;width:1190px;height:2.5px;background:#fafbfc;border-radius:2px"></div>
<!-- translate badge -->
<div class="a" style="left:1175.2px;top:143px;width:22px;height:21.6px;border-radius:11px 0 0 11px;background:#fff;box-shadow:0 0 3px rgba(0,0,0,.08)"></div>
<div class="a" style="left:1182.9px;top:147.5px;width:12px;height:12px;border-radius:50%;background:#5a5cf0"></div>
<div class="a" style="left:1187.6px;top:157.5px;width:0;height:0;border-left:1.6px solid transparent;border-right:1.6px solid transparent;border-top:3px solid #5a5cf0"></div><div class="t" style="left:1184.9px;top:149.5px;width:8px;text-align:center;font-size:8px;line-height:8px;letter-spacing:0;color:#fff">译</div>

</body></html>
